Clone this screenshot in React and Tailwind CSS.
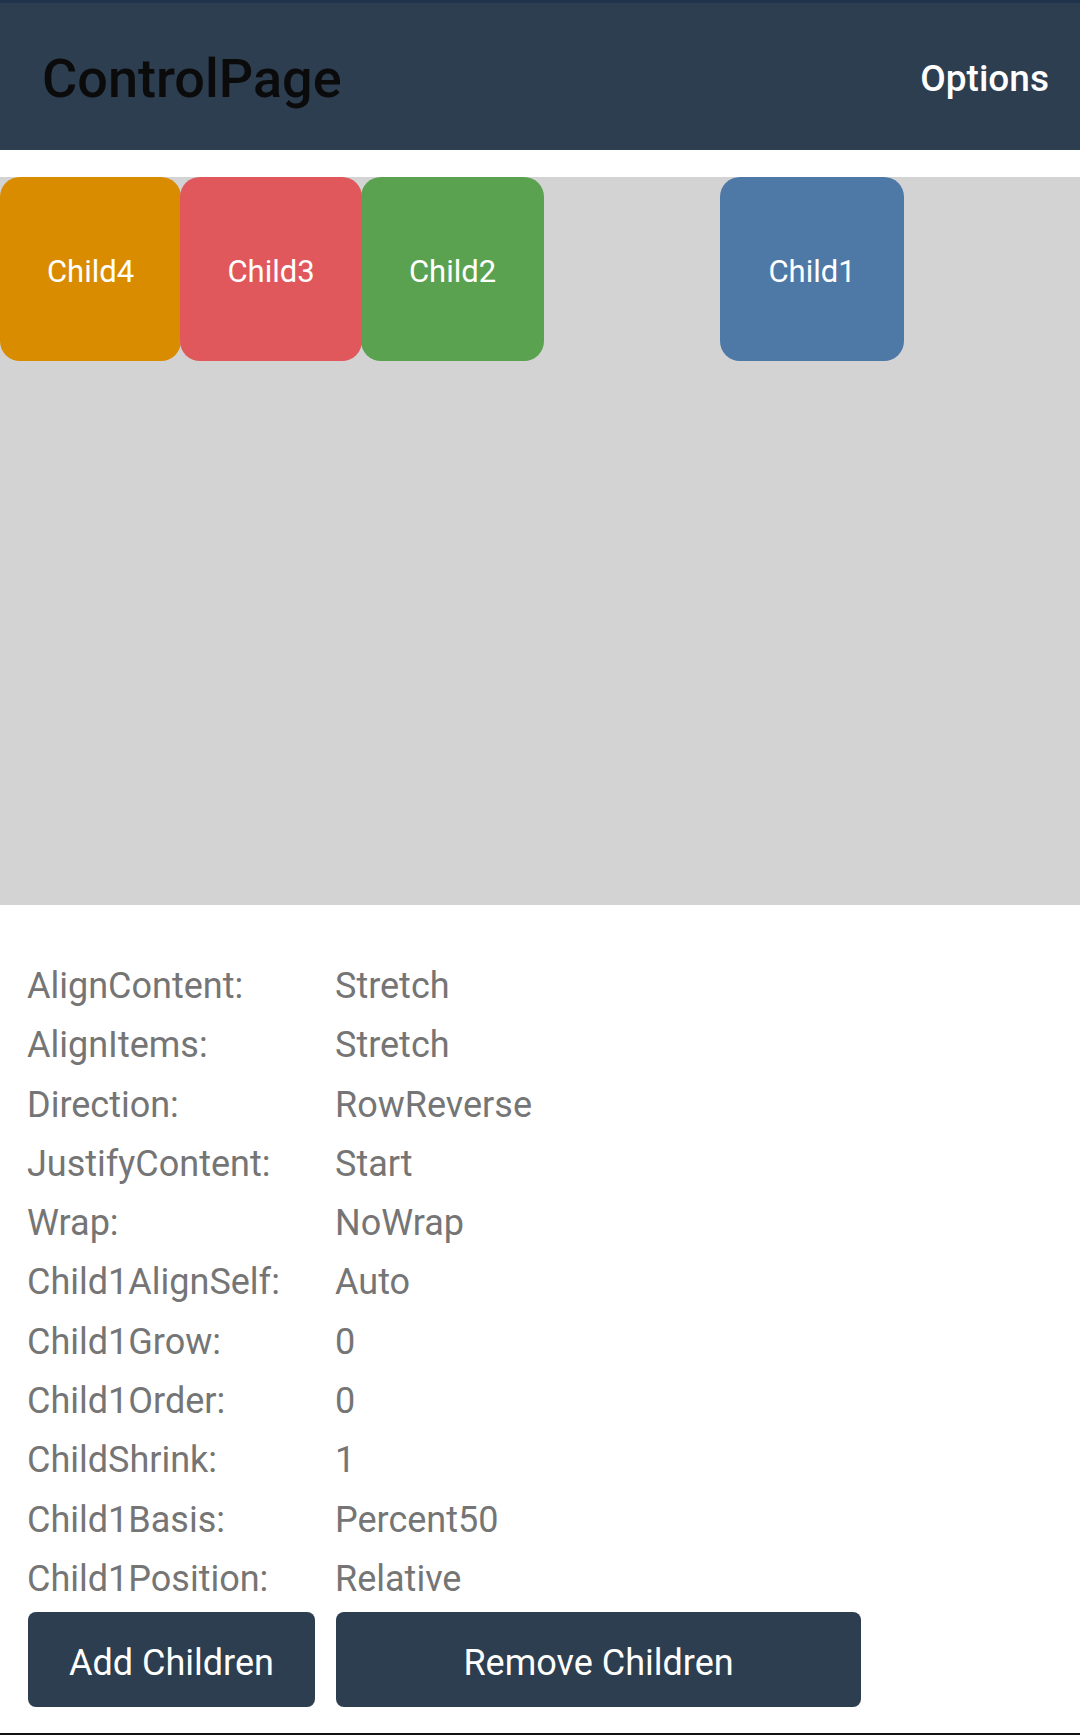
import React from "react";

const rows = [
  ["AlignContent:", "Stretch"],
  ["AlignItems:", "Stretch"],
  ["Direction:", "RowReverse"],
  ["JustifyContent:", "Start"],
  ["Wrap:", "NoWrap"],
  ["Child1AlignSelf:", "Auto"],
  ["Child1Grow:", "0"],
  ["Child1Order:", "0"],
  ["ChildShrink:", "1"],
  ["Child1Basis:", "Percent50"],
  ["Child1Position:", "Relative"],
];

function Box({ label, className }) {
  return (
    <div className={"h-[184px] pt-[6px] rounded-[20px] flex items-center justify-center text-white text-[31px] " + className}>
      {label}
    </div>
  );
}

export default function App() {
  return (
    <div className="w-[1080px] h-[1735px] flex flex-col bg-white font-['Roboto','Noto_Sans',sans-serif]">
      <div className="h-[3px] bg-[#1f344a]" />
      <header className="h-[147px] bg-[#2c3e50] flex items-center justify-between pl-[42px] pr-[31px]">
        <h1 className="mt-[5px] text-[54px] leading-none font-medium text-[#0b0b0b]">ControlPage</h1>
        <button className="mt-[3px] text-[37px] leading-none font-medium text-white">Options</button>
      </header>
      <div className="h-[27px]" />
      <div className="h-[728px] bg-[#d3d3d3] flex items-start">
        <Box label="Child4" className="w-[181px] bg-[#da8c00]" />
        <Box label="Child3" className="w-[182px] -ml-[1px] bg-[#e1585c]" />
        <Box label="Child2" className="w-[183px] -ml-[1px] bg-[#5aa250]" />
        <Box label="Child1" className="w-[184px] ml-[176px] bg-[#4e79a7]" />
      </div>
      <div className="pt-[52px] pl-[27px] grid grid-cols-[308px_1fr] text-[36px] leading-[59.3px] text-[#757575]">
        {rows.map(([k, v]) => (
          <React.Fragment key={k}>
            <div>{k}</div>
            <div>{v}</div>
          </React.Fragment>
        ))}
      </div>
      <div className="mt-[3px] pl-[28px] flex gap-[21px]">
        <button className="w-[287px] h-[95px] pt-[6px] rounded-[8px] bg-[#2c3e50] text-white text-[36px]">Add Children</button>
        <button className="w-[525px] h-[95px] pt-[6px] rounded-[8px] bg-[#2c3e50] text-white text-[36px]">Remove Children</button>
      </div>
      <div className="flex-1" />
      <div className="h-[2px] bg-[#111111]" />
    </div>
  );
}
